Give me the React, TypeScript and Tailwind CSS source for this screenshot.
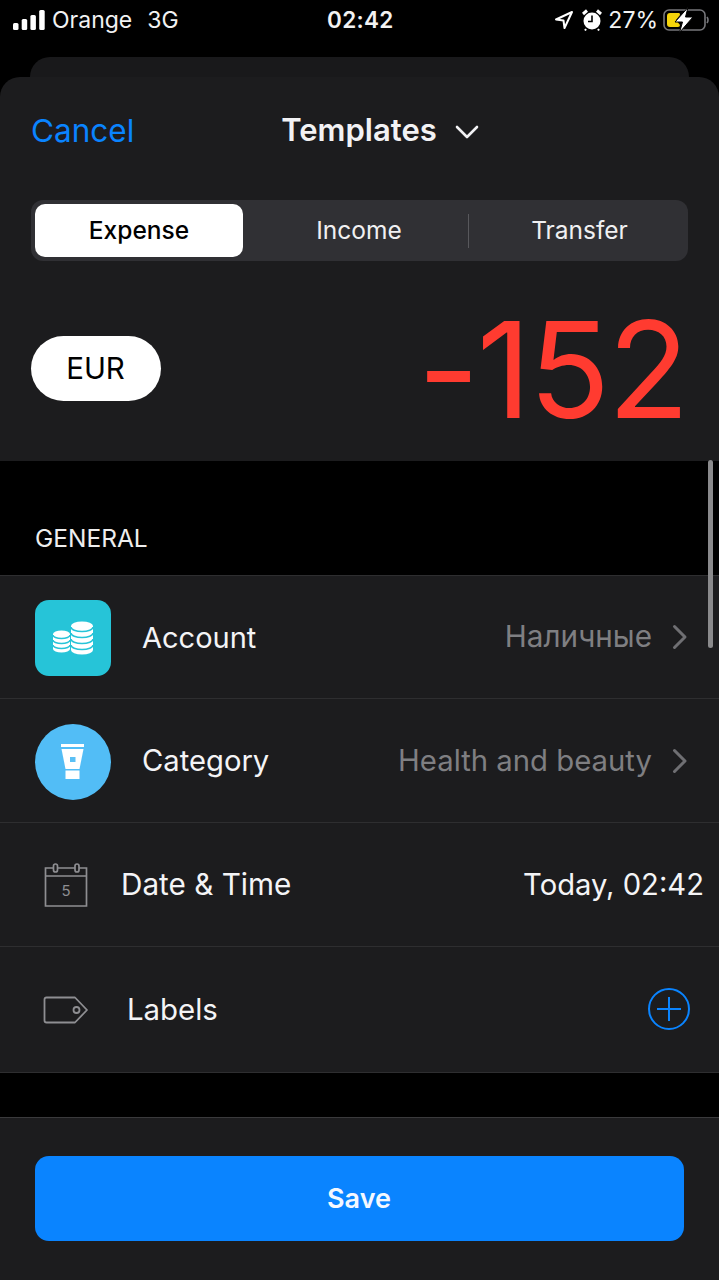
import React from "react";

const font = { fontFamily: "Inter, 'Noto Sans', sans-serif" };

function Chevron() {
  return (
    <svg width="16" height="26" viewBox="0 0 16 26" fill="none" stroke="#6f6f73" strokeWidth="3" strokeLinecap="round" strokeLinejoin="round" className="ml-[20px]">
      <path d="M2.5 2.5 L13 13 L2.5 23.5" />
    </svg>
  );
}

function Coins() {
  const teal = "#26c4d8";
  const stack = (cx: number, rx: number, top: number, count: number, step: number) => {
    const ry = rx * 0.42;
    const bottom = top + step * count;
    return (
      <g key={cx}>
        <path d={`M${cx - rx} ${top} A${rx} ${ry} 0 0 1 ${cx + rx} ${top} V${bottom} A${rx} ${ry} 0 0 1 ${cx - rx} ${bottom} Z`} fill="#fff" />
        {Array.from({ length: count }, (_, i) => (
          <path key={i} d={`M${cx - rx} ${top + step * i + 1} A${rx} ${ry} 0 0 0 ${cx + rx} ${top + step * i + 1}`} fill="none" stroke={teal} strokeWidth="1.5" />
        ))}
      </g>
    );
  };
  return (
    <svg width="40" height="34" viewBox="0 0 40 34">
      {stack(8.5, 8.5, 13, 3, 5)}
      {stack(29, 11, 5, 4, 6)}
    </svg>
  );
}

function Tube() {
  return (
    <svg width="24" height="36" viewBox="0 0 24 36">
      <rect x="0" y="0" width="23" height="3" fill="#fff" />
      <path d="M0.5 5 H22.5 L18.5 25 H4.5 Z" fill="#fff" />
      <rect x="4.5" y="26.5" width="14" height="8.5" fill="#fff" />
      <rect x="9" y="13" width="5.5" height="5" fill="#5ac0f5" />
    </svg>
  );
}

function Row({ icon, label, labelClass, value, valueClass, trailing, h }: { icon: React.ReactNode; label: string; labelClass: string; value?: string; valueClass?: string; trailing?: React.ReactNode; h: string }) {
  return (
    <div className={`flex items-center border-b border-[#2e2e30] ${h}`}>
      {icon}
      <span className={`leading-none text-[#f4f4f6] ${labelClass}`}>{label}</span>
      <div className="flex-1" />
      {value && <span className={`leading-none ${valueClass}`}>{value}</span>}
      {trailing}
    </div>
  );
}

export default function App() {
  return (
    <div className="relative flex h-[1280px] w-[719px] flex-col overflow-hidden bg-black text-white" style={font}>
      <div className="relative flex h-[40px] shrink-0 items-center justify-between pl-[13px] pr-[10px] text-[23px] leading-none text-[#f2f2f2]">
        <div className="flex w-[260px] items-center">
          <svg width="32" height="20" viewBox="0 0 32 20" fill="#fff">
            <rect x="0" y="13" width="5.5" height="7" rx="1.5" />
            <rect x="8.7" y="9" width="5.5" height="11" rx="1.5" />
            <rect x="17.4" y="5" width="5.5" height="15" rx="1.5" />
            <rect x="26.2" y="0" width="5.5" height="20" rx="1.5" />
          </svg>
          <span className="ml-[7px]">Orange</span>
          <span className="ml-[15px]">3G</span>
        </div>
        <span className="absolute left-[327px] top-[9px] text-[22.5px] font-semibold leading-none tracking-[0.3px]">02:42</span>
        <div className="flex w-[260px] items-center justify-end">
          <svg width="20" height="20" viewBox="0 0 20 20" fill="none" stroke="#fff" strokeWidth="2" strokeLinejoin="round">
            <path d="M2 9.5 L18 2 L10.5 18 L9.5 10.5 Z" />
          </svg>
          <svg width="20" height="22" viewBox="0 0 20 22" className="ml-[8px]">
            <circle cx="10" cy="12" r="8.5" fill="#fff" />
            <path d="M10 6.5 V12.5 H6" stroke="#000" strokeWidth="1.6" fill="none" />
            <path d="M1 5 L5 1.5 M19 5 L15 1.5" stroke="#fff" strokeWidth="3" />
            <path d="M4 20 L3 21.5 M16 20 L17 21.5" stroke="#fff" strokeWidth="2" />
          </svg>
          <span className="ml-[6px]">27%</span>
          <svg width="46" height="26" viewBox="0 0 46 26" className="ml-[5px]" fill="none">
            <rect x="1" y="3" width="41" height="20" rx="5" stroke="#77777b" strokeWidth="1.6" />
            <path d="M4 9 Q4 6 7 6 H16 Q17 6 17 8 L13 13 L17 18 Q17 20 15 20 H7 Q4 20 4 17 Z" fill="#f6d50a" />
            <path d="M25 0.5 L12 15 H19.5 L16.5 25.5 L30 10 H22.5 Z" fill="#fff" stroke="#000" strokeWidth="1" />
            <path d="M44 10 Q46 13 44 16" stroke="#77777b" strokeWidth="1.6" />
          </svg>
        </div>
      </div>

      <div className="mx-[30px] mt-[17px] h-[20px] shrink-0 rounded-t-[20px] bg-[#19191b]" />

      <div className="flex min-h-0 flex-1 flex-col overflow-hidden rounded-t-[20px] bg-black">
        <div className="flex h-[384px] shrink-0 flex-col bg-[#1c1c1e]">
          <div className="relative flex h-[107px] shrink-0 items-center justify-center">
            <span className="absolute left-[31px] top-[38px] text-[31.5px] leading-none text-[#0a84ff]">Cancel</span>
            <div className="relative mt-[-2px] flex items-center pr-[1px]">
              <span className="text-[31px] font-semibold leading-none text-[#f2f2f4]">Templates</span>
              <svg width="24" height="14" viewBox="0 0 24 14" fill="none" stroke="#f2f2f4" strokeWidth="2.6" strokeLinecap="round" strokeLinejoin="round" className="absolute left-[174px] top-[11px]">
                <path d="M2 2 L12 12 L22 2" />
              </svg>
            </div>
          </div>

          <div className="mx-[31px] mt-[16px] flex h-[61px] shrink-0 items-center rounded-[12px] bg-[#303034] p-[4px] text-[24.5px] text-[#f0f0f2]">
            <div className="flex h-[53px] w-[208px] items-center justify-center rounded-[10px] bg-white font-medium text-black">Expense</div>
            <div className="flex flex-1 items-center justify-center pl-[7px]">Income</div>
            <div className="h-[34px] w-px bg-[#58585c]" />
            <div className="flex w-[215px] items-center justify-center pl-[6px]">Transfer</div>
          </div>

          <div className="flex flex-1 items-center justify-between pl-[31px] pr-[32px]">
            <div className="mt-[15px] flex h-[65px] w-[130px] items-center justify-center rounded-full bg-white pr-[1px] text-[29.5px] text-black">EUR</div>
            <span className="mt-[15px] text-[134px] font-normal leading-none tracking-[-2.5px] text-[#ff3b30]">-152</span>
          </div>
        </div>

        <div className="flex h-[115px] shrink-0 items-end border-b border-[#2e2e30] pb-[25px] pl-[35px] text-[24.5px] leading-none text-[#eeeeee]">GENERAL</div>

        <div className="shrink-0 bg-[#1c1c1e]">
          <Row
            h="h-[123px]"
            icon={<div className="ml-[35px] mt-[1px] flex h-[76px] w-[76px] items-center justify-center rounded-[14px] bg-[#26c4d8]"><Coins /></div>}
            label="Account"
            labelClass="ml-[31px] text-[29px]"
            value="Наличные"
            valueClass="text-[29.7px] text-[#7f7f82]"
            trailing={<div className="mr-[31px]"><Chevron /></div>}
          />
          <Row
            h="h-[124px]"
            icon={<div className="ml-[35px] mt-[3px] flex h-[76px] w-[76px] items-center justify-center rounded-full bg-[#52bdf6]"><Tube /></div>}
            label="Category"
            labelClass="ml-[31px] text-[29.2px]"
            value="Health and beauty"
            valueClass="text-[29.3px] text-[#7f7f82]"
            trailing={<div className="mr-[31px]"><Chevron /></div>}
          />
          <Row
            h="h-[124px]"
            icon={
              <svg width="44" height="44" viewBox="0 0 44 44" fill="none" stroke="#8e8e92" strokeWidth="1.7" className="ml-[44px]">
                <path d="M1.5 5 H42.5 V43 H1.5 Z M1.5 13 H42.5" />
                <rect x="9.5" y="1" width="4" height="8" rx="2" fill="#1c1c1e" />
                <rect x="31" y="1" width="4" height="8" rx="2" fill="#1c1c1e" />
                <text x="22" y="33" textAnchor="middle" fontSize="15" fill="#8e8e92" stroke="none" fontFamily="Inter, sans-serif">5</text>
              </svg>
            }
            label="Date & Time"
            labelClass="ml-[33px] text-[29.7px]"
            value="Today, 02:42"
            valueClass="mr-[15px] text-[29.2px] text-[#f4f4f6]"
          />
          <Row
            h="h-[126px]"
            icon={
              <svg width="46" height="28" viewBox="0 0 46 28" fill="none" stroke="#8e8e92" strokeWidth="1.8" strokeLinejoin="round" className="ml-[43px]">
                <path d="M3.5 1.5 H32 L44 14 L32 26.5 H3.5 Q1.5 26.5 1.5 24.5 V3.5 Q1.5 1.5 3.5 1.5 Z" />
                <circle cx="33.5" cy="14" r="3" />
              </svg>
            }
            label="Labels"
            labelClass="ml-[38px] text-[29.4px]"
            trailing={
              <svg width="44" height="44" viewBox="0 0 44 44" fill="none" stroke="#0a84ff" strokeWidth="2" className="mr-[28px] mb-[2px]">
                <circle cx="22" cy="22" r="20" />
                <path d="M22 10 V34 M10 22 H34" />
              </svg>
            }
          />
        </div>

        <div className="h-[44px] shrink-0" />

        <div className="flex flex-1 flex-col border-t border-[#3a3a3c] bg-[#1c1c1e] px-[35px] pt-[38px]">
          <div className="flex h-[85px] w-[649px] items-center justify-center rounded-[14px] bg-[#0a84ff] pr-[1px] pt-[2px] text-[27px] font-semibold text-[#f4f8ff]">Save</div>
        </div>
      </div>

      <div className="absolute left-[708px] top-[460px] h-[188px] w-[5px] rounded-full bg-[#8a8a8c]" />
    </div>
  );
}
